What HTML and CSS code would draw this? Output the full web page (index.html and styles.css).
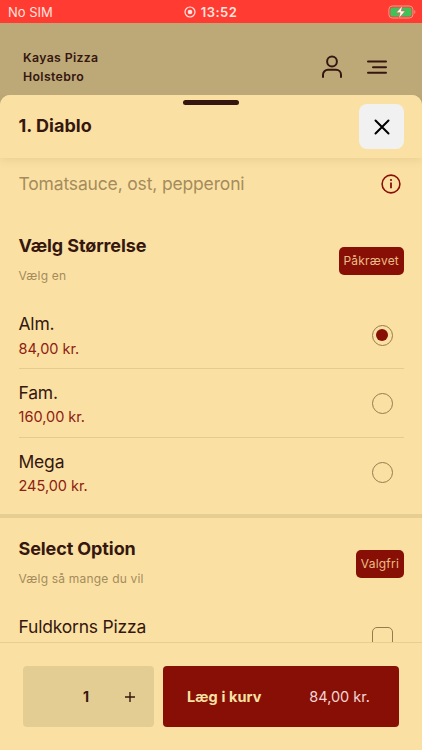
FILE: index.html
```html
<!DOCTYPE html>
<html lang="da">
<head>
<meta charset="utf-8">
<meta name="viewport" content="width=device-width, initial-scale=1">
<title>Kayas Pizza Holstebro</title>
<link rel="stylesheet" href="styles.css">
</head>
<body>
<div class="screen">
  <div class="status">
    <span class="carrier">No SIM</span>
    <span class="clock">
      <svg class="rec" viewBox="0 0 12 12"><circle cx="6" cy="6" r="5" fill="none" stroke="currentColor" stroke-width="1.2"/><circle cx="6" cy="6" r="2.3" fill="currentColor"/></svg>
      <span class="time">13:52</span>
    </span>
    <svg class="battery" viewBox="0 0 28 14"><rect x=".9" y="1" width="24" height="12" rx="3.4" fill="none" stroke="#e9a08c" stroke-width="1"/><rect x="2.4" y="2.5" width="21" height="9" rx="2" fill="#3fc25a"/><path d="M26.2 5v4c1.6-.6 1.6-3.400 0-4z" fill="#f58a78"/><path d="M14.600.6 8.200 7.700h4l-1.500 5.700 6.500-7.300h-4z" fill="#fff" stroke="#ff3b32" stroke-width=".5"/></svg>
  </div>
  <header class="top">
    <div class="brand"><span>Kayas Pizza</span><span>Holstebro</span></div>
    <svg class="user" viewBox="0 0 22 24"><circle cx="11" cy="6.500" r="4.900"/><path d="M2 22v-2.200a5 5 0 0 1 5-5h8a5 5 0 0 1 5 5V22"/></svg>
    <svg class="menu" viewBox="0 0 22 16"><path d="M2 2.500h18M7 8.200h13M2 13.700h18"/></svg>
  </header>
  <main class="sheet">
    <div class="sheet-head">
      <span class="handle"></span>
      <h1 class="title product">1. Diablo</h1>
      <button class="close" aria-label="Luk"><svg viewBox="0 0 16 16"><path d="M1.500 1.500l13 13M14.500 1.500l-13 13"/></svg></button>
    </div>
    <div class="content">
      <div class="desc">
        <span class="desc-text">Tomatsauce, ost, pepperoni</span>
        <svg class="info" viewBox="0 0 20 20"><circle cx="10" cy="10" r="8.900" fill="none" stroke="currentColor" stroke-width="1.600"/><circle cx="10" cy="6" r="1.100" fill="currentColor"/><path d="M10 8.600v5.600" stroke="currentColor" stroke-width="1.800"/></svg>
      </div>
      <section class="group">
        <div class="group-head">
          <div><h2 class="title">Vælg Størrelse</h2><p class="hint">Vælg en</p></div>
          <span class="badge">Påkrævet</span>
        </div>
        <div class="option"><div><p class="name">Alm.</p><p class="price">84,00 kr.</p></div><span class="radio checked"></span></div>
        <div class="option"><div><p class="name">Fam.</p><p class="price">160,00 kr.</p></div><span class="radio"></span></div>
        <div class="option"><div><p class="name">Mega</p><p class="price">245,00 kr.</p></div><span class="radio"></span></div>
      </section>
      <section class="group extras">
        <div class="group-head">
          <div><h2 class="title">Select Option</h2><p class="hint">Vælg så mange du vil</p></div>
          <span class="badge">Valgfri</span>
        </div>
        <div class="option"><div><p class="name">Fuldkorns Pizza</p></div><span class="checkbox"></span></div>
      </section>
    </div>
    <footer class="footer">
      <div class="stepper">
        <span class="minus"></span><span class="count">1</span>
        <svg class="plus" viewBox="0 0 12 12"><path d="M6 1v10M1 6h10"/></svg>
      </div>
      <button class="add"><span class="add-label">Læg i kurv</span><span class="add-price">84,00 kr.</span></button>
    </footer>
  </main>
</div>
</body>
</html>
```
FILE: styles.css
```css
* { box-sizing: border-box; margin: 0; padding: 0; }
body { font-family: Inter, "Liberation Sans", sans-serif; color: #351710; background: #bda978; }
svg { display: block; flex: none; }
.screen { width: 422px; height: 750px; overflow: hidden; display: flex; flex-direction: column; background: #bda978; }

.status { height: 23px; flex: none; background: #ff3b32; color: #ffe4df; display: grid; grid-template-columns: 1fr auto 1fr; align-items: center; padding: 1px 8px 0 8px; font-size: 13px; line-height: 16px; }
.clock { display: flex; align-items: center; gap: 5px; font-weight: 600; }
.time { letter-spacing: .45px; }
.rec { width: 12px; height: 12px; margin-left: -1px; }
.battery { width: 28px; height: 14px; justify-self: end; margin-right: -2px; }

.top { height: 72px; flex: none; display: flex; align-items: center; padding: 17px 34px 0 23px; }
.brand { display: flex; flex-direction: column; font-size: 12.300px; line-height: 19px; font-weight: 600; letter-spacing: .35px; margin: -1px auto 0 0; }
.user, .menu { fill: none; stroke: #351710; stroke-width: 2; stroke-linecap: round; }
.user { width: 22px; height: 24px; margin: -2px 23px 0 0; }
.menu { width: 22px; height: 16px; margin-top: -2px; }

.sheet { flex: 1; min-height: 0; display: flex; flex-direction: column; background: #fae1a3; border-radius: 10px 10px 0 0; }
.sheet-head { position: relative; z-index: 1; height: 63px; flex: none; display: flex; align-items: center; justify-content: space-between; padding: 0 18.500px; box-shadow: 0 2px 10px rgba(90, 60, 0, .11); clip-path: inset(0 0 -14px 0); background: #fae1a3; border-radius: 10px 10px 0 0; }
.handle { position: absolute; top: 5px; left: 183px; width: 56px; height: 5px; border-radius: 3px; background: #351710; }
.title { font-size: 18px; line-height: 24px; font-weight: 700; letter-spacing: -.1px; }
.product { letter-spacing: .02px; margin-top: -2px; }
.close { width: 45px; height: 45px; border: 0; border-radius: 8px; background: #f1f1f1; display: grid; place-items: center; }
.close svg { width: 16px; height: 16px; margin-left: 1px; fill: none; stroke: #000; stroke-width: 2; stroke-linecap: round; }

.content { height: 484px; flex: none; overflow: hidden; }
.desc { height: 51px; display: flex; align-items: center; justify-content: space-between; padding: 0 21px 0 18.500px; color: #a58b5c; }
.desc-text { font-size: 17.500px; line-height: 24px; letter-spacing: -.16px; }
.info { width: 20px; height: 20px; color: #8a1007; }

.group { padding: 24px 18.500px 0; height: 305px; }
.extras { border-top: 4px solid #e6cd92; padding-top: 18px; }
.group-head { display: flex; justify-content: space-between; align-items: center; height: 55px; }
.group-head > div { margin-top: -3px; }
.hint { font-size: 12px; line-height: 16px; letter-spacing: .2px; color: #a58b5c; margin-top: 10.500px; }
.badge { height: 28px; line-height: 28px; padding: 0 4.500px; border-radius: 5px; background: #870f06; color: #e9bd85; font-size: 12px; letter-spacing: .2px; }
.option { height: 68.500px; display: flex; align-items: center; justify-content: space-between; padding: 2px 11px 0 0; border-bottom: 1px solid #e4cb90; }
.group-head + .option { margin-top: 12.500px; }
.option:last-child { border-bottom: 0; }
.option > div { margin-top: 0; }
.name { font-size: 17.500px; line-height: 24px; letter-spacing: -.2px; }
.price { font-size: 14.500px; line-height: 20px; margin-top: 2.500px; color: #8e2011; }
.radio { width: 21px; height: 21px; border: 1px solid #987a4a; border-radius: 50%; display: grid; place-items: center; }
.radio.checked::after { content: ""; width: 12px; height: 12px; border-radius: 50%; background: #870f06; }
.extras .option { align-items: flex-start; padding-top: 11.500px; }
.checkbox { width: 21px; height: 21px; margin-top: 12px; border: 1px solid #987a4a; border-radius: 5px; }

.footer { flex: 1; display: flex; gap: 9.500px; border-top: 1px solid #e7cf94; padding: 22.500px 23px 0; }
.stepper { width: 130.500px; height: 61.500px; border-radius: 4px; background: #e4cd93; display: grid; grid-template-columns: 42px 42px 46px; place-items: center; }
.count { font-size: 14px; font-weight: 700; }
.plus { width: 12px; height: 12px; margin-top: 2px; fill: none; stroke: #351710; stroke-width: 1.400; }
.add { flex: 1; height: 61.500px; border: 0; border-radius: 4px; background: #870f06; display: flex; align-items: center; justify-content: space-between; padding: 0 29px 0 24px; font-family: inherit; font-size: 14.500px; }
.add-label { color: #fae1a3; font-weight: 700; letter-spacing: .1px; }
.add-price { color: #f5d5d3; }
```
